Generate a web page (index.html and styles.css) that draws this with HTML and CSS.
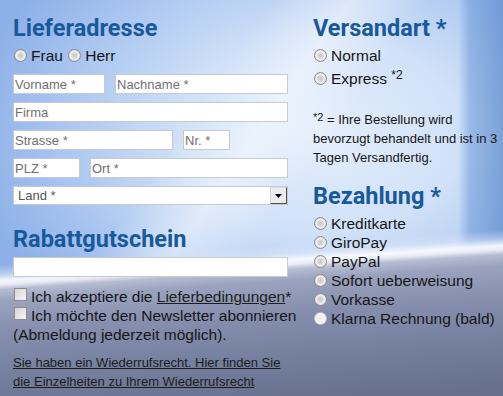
FILE: index.html
```html
<!DOCTYPE html>
<html lang="de">
<head>
<meta charset="utf-8">
<title>Bestellung</title>
<link rel="stylesheet" href="styles.css">
</head>
<body>
<div class="page">
  <section class="col left">
    <h2>Lieferadresse</h2>
    <div class="anrede">
      <label><input type="radio" class="rb" name="anrede">Frau</label>
      <label><input type="radio" class="rb" name="anrede">Herr</label>
    </div>
    <div class="row"><input class="tx w-vorname" placeholder="Vorname *"><input class="tx grow" placeholder="Nachname *"></div>
    <div class="row"><input class="tx grow" placeholder="Firma"></div>
    <div class="row"><input class="tx w-strasse" placeholder="Strasse *"><input class="tx w-nr" placeholder="Nr. *"></div>
    <div class="row"><input class="tx w-plz" placeholder="PLZ *"><input class="tx grow" placeholder="Ort *"></div>
    <div class="select">
      <select><option>Land *</option></select>
      <span class="btn"><svg width="7" height="4" viewBox="0 0 7 4"><path d="M0 0h7L3.5 4z" fill="#000"/></svg></span>
    </div>
    <h2>Rabattgutschein</h2>
    <input class="tx coupon">
    <label class="check"><input type="checkbox" class="cb">Ich akzeptiere die <a href="#">Lieferbedingungen</a>*</label>
    <label class="check"><input type="checkbox" class="cb">Ich möchte den Newsletter abonnieren (Abmeldung jederzeit möglich).</label>
    <p class="legal"><a href="#">Sie haben ein Wiederrufsrecht. Hier finden Sie die Einzelheiten zu Ihrem Wiederrufsrecht</a></p>
  </section>
  <section class="col right">
    <h2>Versandart *</h2>
    <div class="versand">
      <label><input type="radio" class="rb" name="versand">Normal</label>
      <label><input type="radio" class="rb" name="versand">Express <span class="sup">*2</span></label>
    </div>
    <p class="note"><span class="sup small">*2</span> = Ihre Bestellung wird<br>bevorzugt behandelt und ist in 3 Tagen Versandfertig.</p>
    <h2>Bezahlung *</h2>
    <div class="pay">
      <label><input type="radio" class="rb" name="pay">Kreditkarte</label>
      <label><input type="radio" class="rb" name="pay">GiroPay</label>
      <label><input type="radio" class="rb" name="pay">PayPal</label>
      <label><input type="radio" class="rb" name="pay">Sofort ueberweisung</label>
      <label><input type="radio" class="rb" name="pay">Vorkasse</label>
      <label><input type="radio" class="rb" name="pay" disabled>Klarna Rechnung (bald)</label>
    </div>
  </section>
</div>
</body>
</html>
```
FILE: styles.css
```css
html, body {
  margin: 0;
  height: 100%;
}
body {
  font-family: "Liberation Sans", Arial, sans-serif;
  color: #161616;
}
.page {
  box-sizing: border-box;
  height: 100vh;
  overflow: hidden;
  padding: 14px 0 0 13px;
  display: grid;
  grid-template-columns: 290px 1fr;
  column-gap: 10px;
  align-items: start;
  background:
    linear-gradient(176deg, rgba(0,0,0,0) 0px, rgba(0,0,0,0) 264px, rgba(220,230,248,.5) 273px, rgba(250,251,255,.95) 280px, rgba(232,235,244,1) 284px, #b5bcd2 289px, #9aa3be 300px, #8690ae 330px, #737e9d 380px, #67718f 420px),
    linear-gradient(90deg, rgba(90,140,210,0) 458px, rgba(90,140,210,.45) 470px, rgba(75,125,195,.6) 503px),
    linear-gradient(125deg, rgba(255,255,255,0) 35%, rgba(255,255,255,.45) 45%, rgba(255,255,255,0) 55%),
    radial-gradient(ellipse 70% 62% at 64% 34%, #e4eefc 0%, #d0e1f8 40%, #a9c5f0 75%, #8db0e8 100%);
  background-color: #93b4ea;
}
h2 {
  font-family: Roboto, "Liberation Sans", sans-serif;
  font-weight: 700;
  font-size: 23.5px;
  line-height: 28px;
  margin: 0 0 4px;
  color: #17599b;
}
.anrede {
  font-size: 15.5px;
  line-height: 20px;
  margin-bottom: 8px;
}
.rb {
  appearance: none;
  -webkit-appearance: none;
  box-sizing: border-box;
  width: 13px;
  height: 13px;
  margin: 0 4px 0 1px;
  vertical-align: -1px;
  border-radius: 50%;
  border: 1px solid #8c8c8c;
  background: radial-gradient(circle at 50% 50%, #c9c9c9 0, #d6d6d6 2.5px, #f0f0f0 4px, #d8d8d8 6px);
}
.rb:disabled {
  border-color: #c4c4c4;
  background: radial-gradient(circle, #ececec 0, #f6f6f6 5px);
}
.row {
  display: flex;
  gap: 10px;
  width: 275px;
  margin-bottom: 8px;
}
.tx {
  box-sizing: border-box;
  height: 20px;
  margin: 0;
  padding: 0 1px;
  min-width: 0;
  border: 1px solid #c6cad3;
  background: #fff;
  font: 13px "Liberation Sans", Arial, sans-serif;
  color: #222;
  outline: 0;
}
.tx::placeholder {
  color: #707070;
}
.w-vorname { width: 92px; }
.w-strasse { width: 160px; }
.w-nr { width: 47px; }
.w-plz { width: 67px; }
.grow { flex: 1; }
.select {
  box-sizing: border-box;
  display: flex;
  width: 275px;
  height: 19px;
  border: 1px solid #c6cad3;
  background: #fff;
  margin-bottom: 20px;
}
.select select {
  appearance: none;
  -webkit-appearance: none;
  flex: 1;
  border: 0;
  margin: 0;
  padding: 0 0 0 4px;
  background: transparent;
  font: 13px "Liberation Sans", Arial, sans-serif;
  color: #555;
  outline: 0;
}
.select .btn {
  box-sizing: border-box;
  width: 17px;
  height: 17px;
  border: 1px solid;
  border-color: #d8d8d8 #505050 #505050 #d8d8d8;
  background: #ececec;
  display: flex;
  align-items: center;
  justify-content: center;
}
.coupon {
  display: block;
  width: 275px;
  margin-bottom: 10px;
}
.check {
  display: block;
  font-size: 15.5px;
  line-height: 19px;
}
.cb {
  appearance: none;
  -webkit-appearance: none;
  box-sizing: border-box;
  width: 13px;
  height: 13px;
  margin: 0 4px 0 1px;
  vertical-align: 1px;
  border: 1px solid #8c8c8c;
  background: linear-gradient(135deg, #d4d4d4, #f6f6f6);
}
a {
  color: #1d1d1d;
  text-decoration: underline;
}
.legal {
  width: 275px;
  font-size: 13px;
  line-height: 19px;
  margin: 9px 0 0;
}
.versand label {
  display: block;
  font-size: 15.5px;
  line-height: 20px;
  margin-bottom: 3px;
}
.sup {
  font-size: 12px;
  vertical-align: 5px;
  line-height: 0;
}
.sup.small {
  font-size: 11px;
  vertical-align: 3px;
}
.note {
  font-size: 13px;
  line-height: 19px;
  margin: 21px 0 15px;
}
.pay label {
  display: block;
  font-size: 15.5px;
  line-height: 19px;
}
```
